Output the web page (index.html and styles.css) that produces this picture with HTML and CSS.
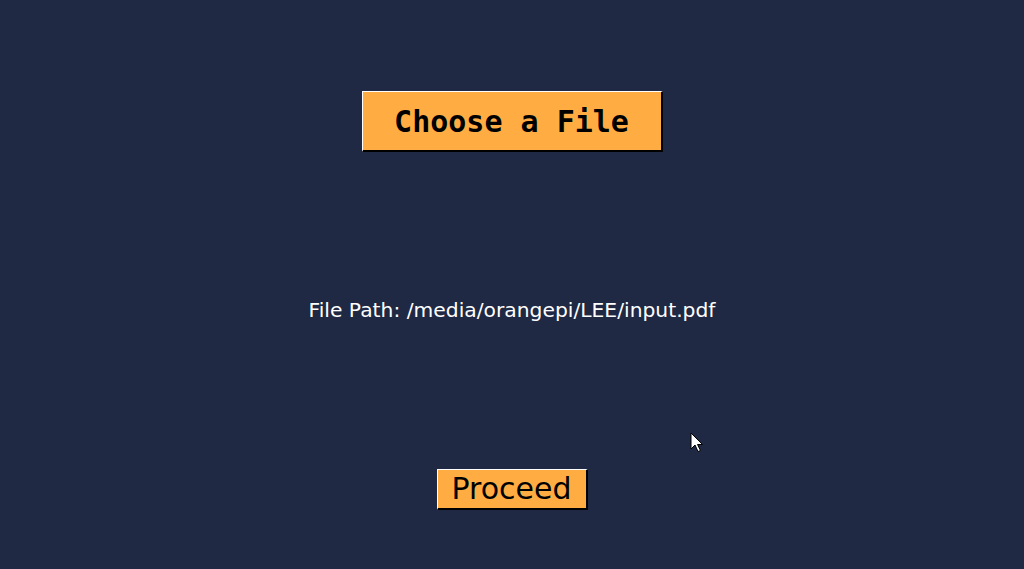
FILE: index.html
```html
<!DOCTYPE html>
<html>
<head>
<meta charset="utf-8">
<link rel="stylesheet" href="styles.css">
</head>
<body>
<main class="app">
  <button class="btn btn-choose">Choose a File</button>
  <p class="path">File Path: /media/orangepi/LEE/input.pdf</p>
  <button class="btn btn-proceed">Proceed</button>
</main>
<svg class="cursor" width="14" height="22" viewBox="0 0 14 22">
  <path d="M1 1 L1 17 L5 13 L8 19.5 L10.5 18.5 L7.5 12.5 L12.5 12.5 Z" fill="#fff" stroke="#000" stroke-width="1"/>
</svg>
</body>
</html>
```
FILE: styles.css
```css
html, body {
  margin: 0;
  padding: 0;
  width: 1024px;
  height: 569px;
  overflow: hidden;
}
body {
  background: #1f2944;
  position: relative;
}
.app {
  display: flex;
  flex-direction: column;
  align-items: center;
  padding-top: 91px;
}
.btn {
  background: #ffad43;
  color: #000;
  border-style: solid;
  border-color: #fff #000 #000 #fff;
  border-width: 1px 2px 2px 1px;
  box-sizing: border-box;
  padding: 0;
  margin: 0;
  cursor: default;
}
.btn-choose {
  width: 301px;
  height: 61px;
  font-family: "DejaVu Sans Mono", monospace;
  font-weight: bold;
  font-size: 30px;
}
.path {
  margin: 146px 0 0 0;
  color: #fff;
  font-family: "DejaVu Sans", sans-serif;
  font-size: 20.3px;
  line-height: 24px;
}
.btn-proceed {
  margin-top: 147px;
  width: 151px;
  height: 41px;
  font-family: "DejaVu Sans", sans-serif;
  font-size: 30px;
  line-height: 1;
}
.cursor {
  position: absolute;
  left: 690px;
  top: 432px;
}
```
